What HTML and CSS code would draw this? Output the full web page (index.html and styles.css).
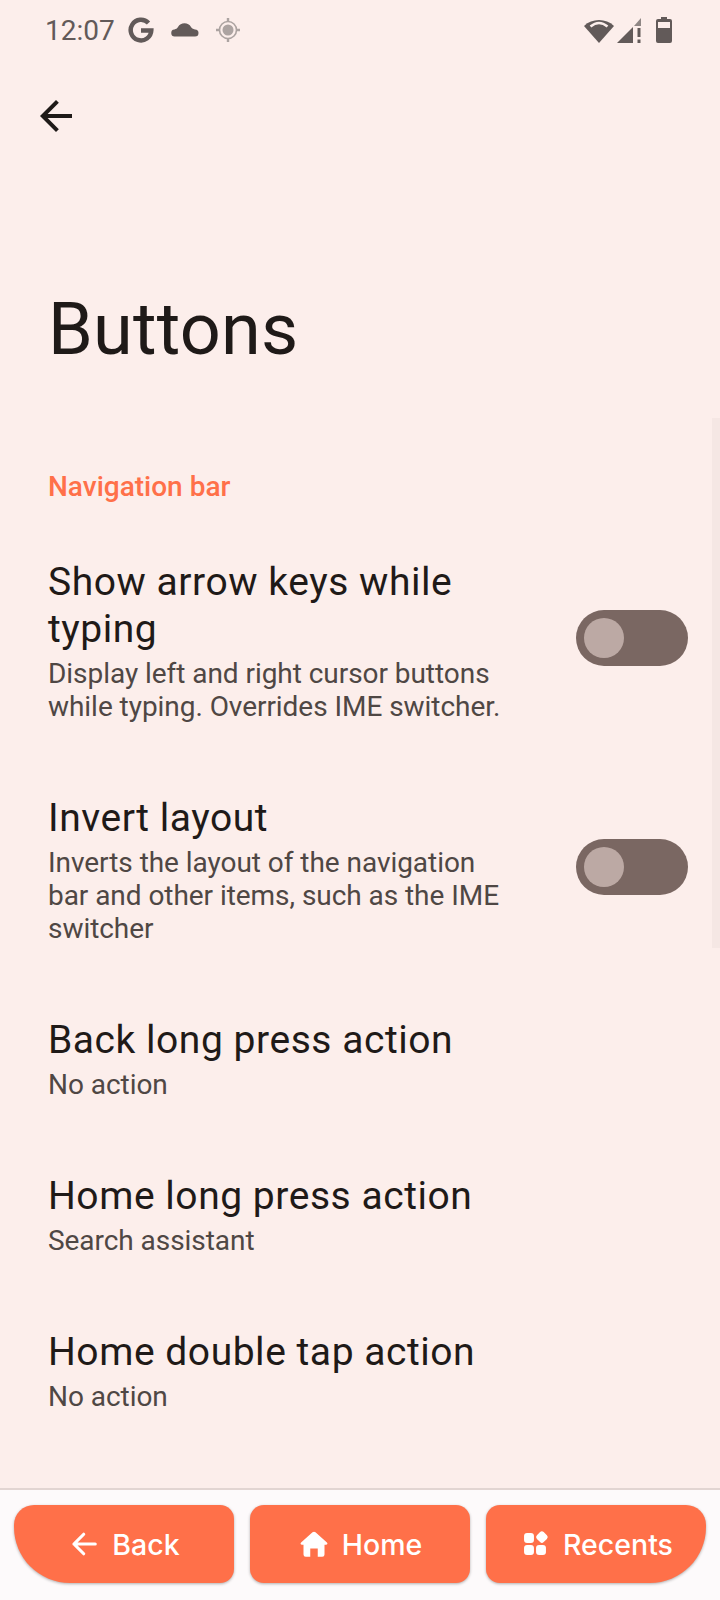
FILE: index.html
```html
<!DOCTYPE html>
<html lang="en">
<head>
<meta charset="utf-8">
<title>Buttons</title>
<link rel="stylesheet" href="styles.css">
</head>
<body>
<div class="screen">
  <header class="status">
    <div class="status-left">
      <span class="time">12:07</span>
      <svg class="i-g" width="26" height="26" viewBox="0 0 26 26"><path fill="none" stroke="#625a59" stroke-width="4.500" d="M20.500 6A10.300 10.300 0 1 0 23.300 13.500H13"/></svg>
      <svg class="i-cloud" width="28" height="16" viewBox="0 0 28 16"><path fill="#625a59" d="M4 15.500a3.500 3.500 0 0 1-.5-7C5 8 6 7.500 7 6A7.500 7.500 0 0 1 20 6c.5 1 2 2 4 2.500a3.500 3.500 0 0 1 0 7z"/></svg>
      <svg class="i-loc" width="24" height="24" viewBox="0 0 24 24"><circle cx="12" cy="12" r="8.500" fill="none" stroke="#aca3a1" stroke-width="1.600"/><circle cx="12" cy="12" r="5.500" fill="#aca3a1"/><path stroke="#aca3a1" stroke-width="2.400" d="M12 0v4M12 20v4M0 12h4M20 12h4"/></svg>
    </div>
    <div class="status-right">
      <svg class="i-wifi" width="30" height="25" viewBox="0 0 30 25"><path fill="#625a59" d="M15 25 0 8A22 22 0 0 1 30 8z"/><path fill="none" stroke="#fceeeb" stroke-width="2.500" d="M6.500 8.500Q15 1.500 23.500 8.500"/></svg>
      <svg class="i-signal" width="25" height="26" viewBox="0 0 25 26"><path fill="#625a59" d="M0 26 16 10v16z"/><path fill="#8f8785" d="M17 9l7-8v8z"/><path fill="#625a59" d="M20.500 11h3v9h-3zM20.500 22.500h3V26h-3z"/></svg>
      <svg class="i-batt" width="16" height="26" viewBox="0 0 16 26"><path fill="#625a59" d="M5 0h6v2h3a2 2 0 0 1 2 2v20a2 2 0 0 1-2 2H2a2 2 0 0 1-2-2V4a2 2 0 0 1 2-2h3z"/><path fill="#fceeeb" d="M2 5h12v6H2z"/></svg>
    </div>
  </header>
  <div class="toolbar">
    <svg width="48" height="48" viewBox="0 0 24 24"><path fill="#1f1a18" d="M20 11H7.830l5.590-5.590L12 4l-8 8 8 8 1.410-1.410L7.830 13H20z"/></svg>
  </div>
  <h1 class="title">Buttons</h1>
  <main class="list">
    <h2 class="section">Navigation bar</h2>
    <div class="row first">
      <div class="text">
        <div class="name">Show arrow keys while typing</div>
        <div class="sub">Display left and right cursor buttons while typing. Overrides IME switcher.</div>
      </div>
      <div class="switch"><span class="thumb"></span></div>
    </div>
    <div class="row">
      <div class="text">
        <div class="name">Invert layout</div>
        <div class="sub">Inverts the layout of the navigation bar and other items, such as the IME switcher</div>
      </div>
      <div class="switch"><span class="thumb"></span></div>
    </div>
    <div class="row"><div class="text"><div class="name">Back long press action</div><div class="sub">No action</div></div></div>
    <div class="row"><div class="text"><div class="name">Home long press action</div><div class="sub">Search assistant</div></div></div>
    <div class="row"><div class="text"><div class="name">Home double tap action</div><div class="sub">No action</div></div></div>
  </main>
  <div class="scroll"></div>
  <nav class="nav">
    <button class="btn b1"><svg width="36" height="36" viewBox="0 0 24 24"><path fill="none" stroke="#fff" stroke-width="2.100" stroke-linecap="round" stroke-linejoin="round" d="M19.500 12H5.300M11.800 5.500 5.300 12l6.500 6.500"/></svg>Back</button>
    <button class="btn b2"><svg width="36" height="36" viewBox="0 0 24 24"><path fill="#fff" d="M11 4.200a1.500 1.500 0 0 1 2 0l7.600 6.800c.7.600.3 1.500-.6 1.500h-1V19a1.500 1.500 0 0 1-1.500 1.500H14.500V15h-5v5.500H6.500A1.500 1.500 0 0 1 5 19v-6.500H4c-.9 0-1.300-.9-.6-1.500z"/></svg>Home</button>
    <button class="btn b3"><svg width="36" height="36" viewBox="0 0 24 24"><rect x="4.700" y="4.700" width="6.600" height="6.600" rx="2" fill="#fff"/><rect x="13.400" y="4.200" width="6.400" height="6.400" rx="1.700" fill="#fff" transform="rotate(45 16.600 7.400)"/><rect x="4.700" y="12.700" width="6.600" height="6.600" rx="2" fill="#fff"/><rect x="12.700" y="12.700" width="6.600" height="6.600" rx="2" fill="#fff"/></svg>Recents</button>
  </nav>
</div>
</body>
</html>
```
FILE: styles.css
```css
* { box-sizing: border-box; }
html, body { margin: 0; }
body { background: #fceeeb; font-family: Roboto, sans-serif; color: #1f1a18; }
.screen { position: relative; width: 720px; height: 1600px; overflow: hidden; display: flex; flex-direction: column; }
.status { height: 60px; padding: 0 48px 0 45px; display: flex; justify-content: space-between; align-items: center; }
.status-left, .status-right { display: flex; align-items: center; }
.time { font-size: 28px; color: #625a59; }
.i-g { margin-left: 13px; }
.i-cloud { margin-left: 17px; margin-top: -3px; }
.i-loc { margin-left: 17px; }
.i-signal { margin-left: 3px; }
.i-batt { margin-left: 14px; }
.toolbar { height: 80px; padding: 32px 0 0 32px; }
.title { margin: 142px 0 0; padding-left: 48px; font-size: 72px; line-height: 96px; font-weight: 400; letter-spacing: .2px; }
.list { margin-top: 91px; padding: 0 48px; }
.section { margin: 0; font-size: 28px; line-height: 36px; font-weight: 500; color: #ff7049; }
.row { display: flex; align-items: center; justify-content: space-between; margin-top: 72px; }
.row.first { margin-top: 54px; }
.text { width: 460px; }
.name { font-size: 39px; line-height: 47px; letter-spacing: .54px; }
.sub { margin-top: 4px; font-size: 28px; line-height: 33px; color: #4f4744; letter-spacing: -.05px; }
.switch { width: 112px; height: 56px; border-radius: 28px; background: #7a6762; margin: 0 -16px 7px 0; padding: 8px; }
.thumb { display: block; width: 40px; height: 40px; border-radius: 50%; background: #bca9a4; }
.scroll { position: absolute; right: 0; top: 418px; width: 8px; height: 530px; background: #f5e7e4; }
.nav { position: absolute; left: 0; right: 0; bottom: 0; height: 112px; border-top: 2px solid #e2d5d2; background: #fdfafb; display: grid; grid-template-columns: repeat(3, 220px); gap: 16px; padding: 15px 14px; }
.btn { height: 78px; border: 0; border-radius: 14px; background: #ff7049; color: #fff; font: 500 28.500px Inter, sans-serif; display: flex; align-items: center; justify-content: center; gap: 10px; padding: 0 2px 0 0; box-shadow: 0 1px 3px rgba(0,0,0,.3); }
.b1 { border-radius: 20px 14px 14px 56px; }
.b3 { border-radius: 14px 20px 56px 14px; }
```
